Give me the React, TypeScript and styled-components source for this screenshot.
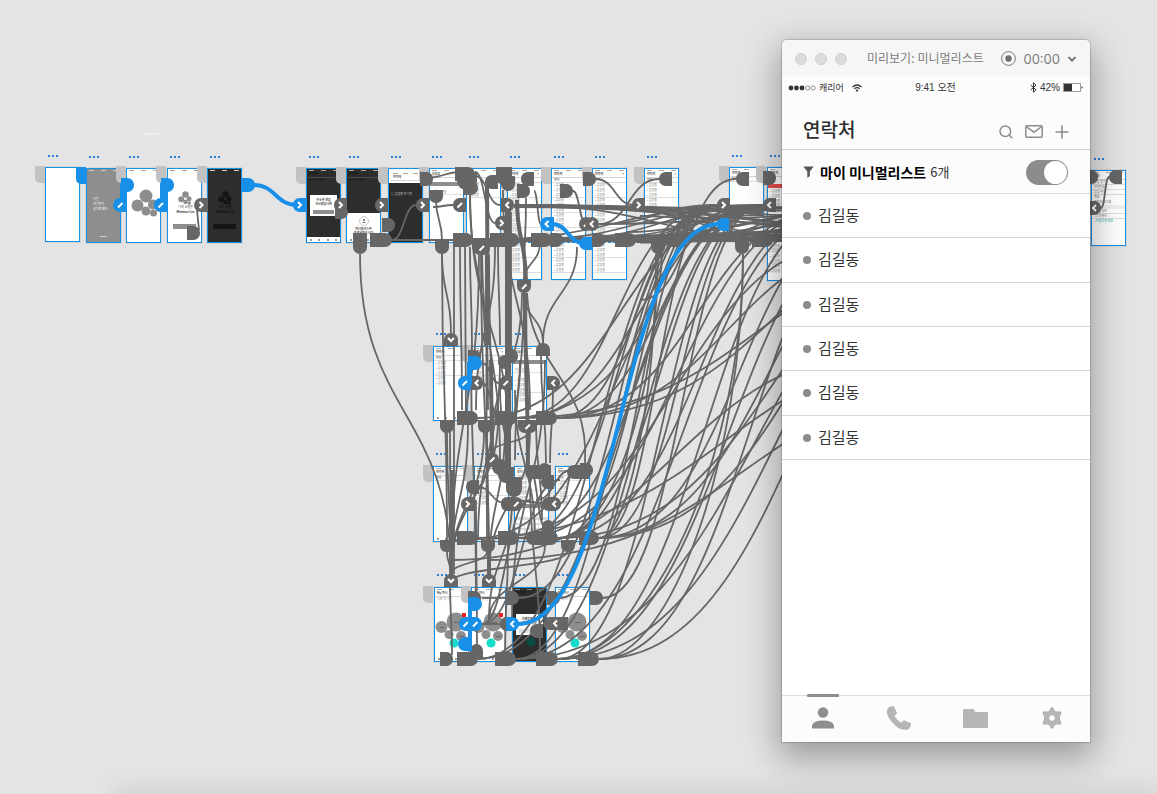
import React from 'react';
import styled, { createGlobalStyle, css } from 'styled-components';

const BLUE = '#1890e8';
const WIRE = '#666666';
const KR = '"Noto Sans CJK KR", sans-serif';

const GlobalStyle = createGlobalStyle`
  * { box-sizing: border-box; }
  body { margin: 0; background: #e4e4e4; font-family: "Liberation Sans", ${KR}; }
  button { border: 0; padding: 0; margin: 0; background: none; font: inherit; color: inherit; }
`;

/* ---------- canvas ---------- */

const Canvas = styled.main`
  position: relative;
  min-height: 100vh;
  overflow: hidden;
  background: #e4e4e4;
`;

const DockShade = styled.div`
  position: absolute;
  left: 120px;
  right: 0;
  bottom: -4px;
  height: 4px;
  box-shadow: 0 4px 24px 6px rgba(0, 0, 0, 0.13);
`;

const StrayLabel = styled.span`
  position: absolute;
  left: 144px;
  top: 132px;
  font-size: 3px;
  line-height: 5px;
  color: #fff;
`;

const HomeTab = styled.span<{ $x: number; $y: number; $on?: boolean }>`
  position: absolute;
  left: ${p => p.$x}px;
  top: ${p => p.$y}px;
  width: 10px;
  height: 17px;
  border-radius: 0 0 0 5px;
  background: ${p => (p.$on ? BLUE : '#c2c2c2')};
`;

const Handle = styled.span<{ $x: number; $y: number }>`
  position: absolute;
  left: ${p => p.$x}px;
  top: ${p => p.$y}px;
  display: flex;
  gap: 2px;
  i { width: 2px; height: 2px; background: #2f82d8; }
`;

const Board = styled.article<{ $x: number; $y: number; $w: number; $h: number; $bg: string; $tall?: boolean }>`
  position: absolute;
  left: ${p => p.$x}px;
  top: ${p => p.$y}px;
  width: ${p => p.$w}px;
  height: ${p => p.$h}px;
  display: flex;
  flex-direction: column;
  overflow: hidden;
  background: ${p => p.$bg};
  border: 1px solid ${BLUE};
  box-shadow: 0 0 0 1px rgba(0, 0, 0, 0.06);
  font-family: ${KR};
  font-size: 3px;
  line-height: 5px;
  color: #666;
  svg { display: block; }
  ${p => p.$tall && css`
    &::after {
      content: '';
      position: absolute;
      left: 0;
      right: 0;
      top: 73px;
      border-top: 1px dashed ${BLUE};
    }
  `}
`;

const MiniStatus = styled.div<{ $c?: string }>`
  display: flex;
  flex: none;
  justify-content: space-between;
  height: 3px;
  padding: 1px 2px;
  i { width: 5px; height: 1px; background: ${p => p.$c || '#aaa'}; }
`;

const MiniTitle = styled.div<{ $c?: string }>`
  display: flex;
  flex: none;
  justify-content: space-between;
  padding: 0 2px;
  height: 6px;
  font-weight: 700;
  color: ${p => p.$c || '#444'};
  border-bottom: 1px solid rgba(128, 128, 128, 0.35);
`;

const MiniRow = styled.div<{ $line?: boolean; $c?: string }>`
  height: 5px;
  flex: none;
  padding-left: 2px;
  color: ${p => p.$c || '#777'};
  border-bottom: 1px solid ${p => (p.$line ? '#dedede' : 'transparent')};
`;

const MiniBar = styled.div<{ $c: string; $m?: string; $h?: number }>`
  flex: none;
  height: ${p => p.$h || 4}px;
  margin: ${p => p.$m || '0'};
  background: ${p => p.$c};
`;

const Fill = styled.div<{ $bg?: string; $pad?: string; $center?: boolean }>`
  flex: 1;
  padding: ${p => p.$pad || '0'};
  background: ${p => p.$bg || 'transparent'};
  text-align: ${p => (p.$center ? 'center' : 'left')};
`;

const MiniCard = styled.div<{ $m: string }>`
  flex: none;
  margin: ${p => p.$m};
  padding: 3px 2px 2px;
  background: #fff;
  color: #333;
  font-weight: 700;
  line-height: 4px;
  text-align: center;
`;

const Keys = styled.div`
  display: grid;
  flex: none;
  grid-template-columns: repeat(7, 1fr);
  gap: 2px 1px;
  height: 24px;
  padding: 3px 1px;
  margin-top: auto;
  background: #d8dbe0;
  i { background: #fff; }
`;

const MiniTabs = styled.div`
  display: flex;
  flex: none;
  justify-content: space-around;
  align-items: center;
  height: 5px;
  background: #fff;
  i { width: 2px; height: 2px; background: #999; }
`;

const Status = ({ c }: { c?: string }) => <MiniStatus $c={c}><i /><i /><i /></MiniStatus>;
const Tabs = () => <MiniTabs><i /><i /><i /><i /></MiniTabs>;

const FlowerSvg = styled.svg`
  margin: 0 auto;
`;

const Flower = ({ c, s }: { c: string; s: number }) => (
  <FlowerSvg width={28 * s} height={28 * s} viewBox="0 0 28 28">
    <g fill={c}>
      <circle cx="15" cy="7" r="6.500" /><circle cx="6.500" cy="16.500" r="6" /><circle cx="22" cy="15.500" r="5" />
      <circle cx="15" cy="22" r="4.500" /><circle cx="22.500" cy="24" r="3.500" />
    </g>
  </FlowerSvg>
);

const BubbleMap = ({ badge }: { badge?: boolean }) => (
  <svg width="33" height="40" viewBox="0 0 33 40">
    <g fill="#8e8e8e">
      <circle cx="21" cy="12" r="9.500" /><circle cx="6.500" cy="17" r="6" />
      <circle cx="14" cy="24.500" r="4.500" /><circle cx="26" cy="26" r="5" />
    </g>
    <g fill="#666"><rect x="19" y="12" width="6" height="1" /><rect x="5" y="17" width="4" height="1" /><rect x="24" y="26" width="5" height="1" /></g>
    <circle cx="19" cy="33" r="4.500" fill="#14dccb" />
    {badge && <rect x="27" y="3" width="4" height="4" fill="#f02020" />}
  </svg>
);

type Kind =
  | 'blank' | 'quote' | 'bubbles' | 'logo' | 'logoDark' | 'dialog' | 'sheet' | 'search'
  | 'list' | 'form' | 'keyboard' | 'map' | 'mapBadge' | 'mapDark' | 'settings' | 'alert';

const names = (n: number) => Array.from({ length: n }, (_, i) => <MiniRow key={i} $line={i % 3 === 2}>• 김길동</MiniRow>);

const Thumb = ({ kind, rows = 7 }: { kind: Kind; rows?: number }) => {
  switch (kind) {
    case 'quote':
      return (
        <>
          <Status c="#ccc" />
          <Fill $pad="25px 0 0 4px"><MiniRow $c="#fff">나는</MiniRow><MiniRow $c="#fff">미니멀리</MiniRow><MiniRow $c="#fff">살기로 했다</MiniRow></Fill>
          <MiniBar $c="#ccc" $h={1} $m="0 13px 5px" />
        </>
      );
    case 'bubbles':
      return <><Status /><Fill $pad="17px 0 0 2px"><Flower c="#8e8e8e" s={1} /></Fill></>;
    case 'logo':
    case 'logoDark': {
      const dark = kind === 'logoDark';
      return (
        <>
          <Status c={dark ? '#ccc' : '#999'} />
          <Fill $center $pad="19px 0 0">
            <Flower c={dark ? '#151515' : '#8e8e8e'} s={0.5} />
            <MiniRow $c={dark ? '#0c0c0c' : '#444'}>나의 소중한</MiniRow>
            <MiniRow $c={dark ? '#0c0c0c' : '#333'}><b>Minimal List</b></MiniRow>
          </Fill>
          <MiniBar $c={dark ? '#151515' : '#8e8e8e'} $h={5} $m="0 5px 13px" />
        </>
      );
    }
    case 'dialog':
      return (
        <>
          <Status c="#aaa" /><MiniTitle $c="#111">연락처</MiniTitle><MiniRow $c="#111">마이 리스트</MiniRow>
          <Fill $pad="12px 3px 0">
            <MiniCard $m="0">주소록 연동<br />하시겠습니까<MiniBar $c="#8e8e8e" $m="4px 1px 0" /></MiniCard>
          </Fill>
          <Tabs />
        </>
      );
    case 'sheet':
      return (
        <>
          <Status c="#aaa" /><MiniTitle $c="#111">연락처</MiniTitle><MiniRow $c="#111">마이 리스트</MiniRow>
          <Fill />
          <MiniCard $m="0">
            <FlowerSvg width="10" height="11" viewBox="0 0 10 11">
              <circle cx="5" cy="5" r="4.500" fill="none" stroke="#999" strokeWidth=".5" />
              <circle cx="5" cy="4" r="1" fill="#555" /><path d="M3 7q2-2 4 0z" fill="#555" />
            </FlowerSvg>
            미니멀리스트<br />추가되었습니다
          </MiniCard>
          <Tabs />
        </>
      );
    case 'search':
      return (
        <>
          <MiniCard $m="0"><Status /><MiniTitle>연락처</MiniTitle></MiniCard>
          <Fill $bg="#2d2d2d" $pad="9px 0 0"><MiniRow $c="#ccc">○ 김길동 미니멀</MiniRow></Fill>
        </>
      );
    case 'list':
      return <><Status /><MiniTitle><span>연락처</span><span>+</span></MiniTitle><MiniRow $line><b>마이</b></MiniRow>{names(rows)}{rows < 15 && <><Fill /><Tabs /></>}</>;
    case 'alert':
      return <><Status /><MiniTitle>연락처</MiniTitle><MiniBar $c="#e84b4b" $m="7px 0 1px" />{names(17)}</>;
    case 'form':
      return <><Status /><MiniTitle>김길동</MiniTitle><MiniBar $c="#8e8e8e" $m="4px 0" /><MiniRow $line>이름 김길동</MiniRow><MiniRow />{names(rows)}<Fill /><Tabs /></>;
    case 'keyboard':
      return (
        <>
          <Status /><MiniTitle>추가</MiniTitle>{names(5)}<MiniBar $c="#8e8e8e" $m="3px 0 0" />
          <Keys>{Array.from({ length: 28 }, (_, i) => <i key={i} />)}</Keys>
        </>
      );
    case 'map':
    case 'mapBadge':
      return <><Status /><MiniTitle>My 미니</MiniTitle><MiniRow>나의 미니멀</MiniRow><Fill $pad="8px 0 0"><BubbleMap badge={kind === 'mapBadge'} /></Fill><Tabs /></>;
    case 'mapDark':
      return (
        <>
          <Status c="#888" /><MiniTitle $c="#111">My 미니</MiniTitle>
          <MiniCard $m="17px 3px 0">삭제할까요?<br />연락처 정보<MiniBar $c="#ddd" $m="4px 1px 0" /></MiniCard>
          <Fill $pad="2px 0 0 13px">
            <svg width="10" height="10" viewBox="0 0 10 10"><circle cx="5" cy="5" r="4.500" fill="#0b4a45" /></svg>
          </Fill>
        </>
      );
    case 'settings':
      return (
        <>
          <Status /><MiniTitle>설정</MiniTitle><MiniRow $line>알림 받기</MiniRow><MiniRow $line>비밀번호</MiniRow><MiniRow $line>잠금 설정</MiniRow>
          <MiniRow>계정</MiniRow><MiniRow>연락처 동기화</MiniRow><MiniBar $c="#f0f0f0" />
          <MiniRow $line>• 버전정보</MiniRow><MiniRow $line>• 고객센터</MiniRow><MiniRow $c="#0a9">• 이용약관 정보</MiniRow>
        </>
      );
    default:
      return null;
  }
};

interface BoardData { x: number; y: number; kind: Kind; h?: number; bg?: string; rows?: number }

const boards: BoardData[] = [
  { x: 45, y: 167, kind: 'blank' },
  { x: 86, y: 168, kind: 'quote', bg: '#8e8e8e' },
  { x: 126, y: 168, kind: 'bubbles' },
  { x: 167, y: 168, kind: 'logo' },
  { x: 207, y: 168, kind: 'logoDark', bg: '#2d2d2d' },
  { x: 306, y: 168, kind: 'dialog', bg: '#2d2d2d' },
  { x: 346, y: 168, kind: 'sheet', bg: '#2d2d2d' },
  { x: 388, y: 168, kind: 'search', bg: '#2d2d2d' },
  { x: 429, y: 168, kind: 'form', rows: 0 },
  { x: 466, y: 168, kind: 'list', rows: 3 },
  { x: 507, y: 168, kind: 'list', h: 112, rows: 18 },
  { x: 551, y: 168, kind: 'list', h: 112, rows: 18 },
  { x: 592, y: 168, kind: 'list', h: 112, rows: 18 },
  { x: 644, y: 168, kind: 'list', rows: 6 },
  { x: 729, y: 167, kind: 'list', rows: 0 },
  { x: 767, y: 167, kind: 'alert', h: 114 },
  { x: 1091, y: 170, kind: 'settings', h: 76 },
  { x: 433, y: 346, kind: 'list', rows: 5 },
  { x: 471, y: 346, kind: 'list', rows: 5 },
  { x: 512, y: 346, kind: 'form', rows: 5 },
  { x: 433, y: 466, kind: 'list', h: 76, rows: 0 },
  { x: 474, y: 466, kind: 'list', h: 76, rows: 5 },
  { x: 514, y: 466, kind: 'keyboard', h: 76 },
  { x: 555, y: 466, kind: 'list', h: 76, rows: 5 },
  { x: 434, y: 587, kind: 'mapBadge' },
  { x: 471, y: 587, kind: 'mapBadge' },
  { x: 512, y: 587, kind: 'mapDark', bg: '#2d2d2d' },
  { x: 555, y: 587, kind: 'map' },
];

const tabs: [number, number][] = [
  [35, 166], [116, 166], [156, 166], [197, 166], [296, 167], [336, 167], [378, 167], [419, 167],
  [541, 167], [582, 167], [634, 167], [719, 166], [756, 166],
  [423, 345], [461, 345], [423, 465], [463, 465], [423, 586], [461, 586],
];

/* ---------- wires ---------- */

type Seg = [number, number, number, number];
const across = ([a, b, c, d]: Seg) => `M${a} ${b}C${(a + c) / 2} ${b} ${(a + c) / 2} ${d} ${c} ${d}`;
const down = ([a, b, c, d]: Seg) => `M${a} ${b}C${a} ${(b + d) / 2} ${c} ${(b + d) / 2} ${c} ${d}`;
const bend = ([a, b, c, d]: Seg) => `M${a} ${b}C${a} ${(b + d) / 2} ${(a + c) / 2} ${d} ${c} ${d}`;

const acrossWires: Seg[] = [
  // short links inside the top row
  [392, 240, 416, 205], [433, 207, 453, 205], [390, 240, 640, 240], [427, 178, 460, 172],
  [475, 172, 495, 223], [475, 176, 500, 205], [534, 191, 541, 224], [573, 191, 586, 224],
  [596, 179, 634, 205], [659, 179, 599, 224], [736, 179, 640, 300], [717, 205, 672, 230], [1101, 208, 1109, 177],
  // long runs towards the right
  [514, 205, 850, 226], [514, 205, 900, 212], [514, 205, 800, 240], [514, 206, 1005, 222], [514, 207, 960, 236],
  [473, 240, 763, 205], [519, 240, 763, 206], [552, 240, 763, 208], [563, 240, 840, 205], [604, 240, 763, 215],
  [599, 224, 717, 205], [599, 224, 840, 215], [636, 240, 763, 205], [636, 240, 840, 222], [688, 240, 763, 205],
  [688, 240, 840, 205], [519, 240, 900, 230], [473, 240, 900, 237], [519, 241, 840, 241], [552, 238, 820, 234],
  [596, 236, 800, 232], [640, 237, 820, 230], [636, 242, 800, 240], [688, 238, 850, 212],
  [627, 232, 763, 212], [640, 216, 800, 236], [600, 208, 790, 236],
  // second row to the top row and beyond
  [517, 418, 717, 205], [517, 418, 763, 205], [557, 418, 717, 205], [557, 418, 763, 205], [557, 418, 840, 205],
  [557, 418, 900, 240], [557, 418, 1005, 205], [517, 418, 1005, 240], [478, 418, 763, 205],
  // third row
  [478, 538, 763, 205], [519, 538, 717, 205], [519, 538, 763, 205], [519, 538, 840, 205],
  [558, 538, 717, 205], [558, 538, 763, 205], [558, 538, 840, 205], [599, 538, 717, 205], [599, 538, 763, 205],
  [599, 538, 880, 205], [599, 538, 940, 205], [558, 538, 1005, 205], [599, 538, 1005, 205],
  [452, 540, 1000, 340], [452, 560, 900, 350], [490, 560, 1000, 380], [490, 538, 860, 240],
  // fourth row
  [478, 659, 717, 205], [478, 659, 763, 205], [516, 659, 717, 205], [516, 659, 763, 205], [516, 659, 850, 205],
  [516, 659, 1005, 205], [558, 659, 763, 205], [558, 659, 850, 205], [558, 659, 900, 205], [558, 659, 1005, 205],
  [599, 659, 900, 205], [599, 659, 1005, 205],
  [602, 598, 763, 205], [559, 598, 717, 205], [519, 598, 717, 205], [482, 598, 506, 598],
  [482, 624, 560, 480], [482, 624, 530, 500], [482, 624, 506, 624],
  // links inside the lower rows
  [482, 363, 499, 383], [482, 383, 500, 418], [536, 500, 572, 470], [510, 500, 545, 503], [554, 482, 545, 503],
  [530, 470, 545, 527], [478, 487, 505, 503], [478, 487, 493, 462], [574, 470, 561, 503],
];

const downWires: Seg[] = [
  [360, 254, 451, 574], [442, 254, 451, 333], [442, 254, 447, 540], [436, 200, 442, 240], [481, 255, 489, 574],
  [454, 247, 454, 574], [465, 247, 466, 420], [470, 195, 485, 346], [470, 247, 472, 350],
  [470, 190, 510, 460], [479, 255, 451, 574], [486, 247, 487, 540], [482, 247, 500, 460], [486, 247, 488, 410],
  [489, 255, 492, 453], [495, 247, 476, 410], [511, 212, 511, 350], [503, 190, 530, 410], [526, 198, 524, 282],
  [522, 293, 491, 453], [524, 293, 543, 343], [524, 293, 515, 460], [540, 243, 524, 282], [577, 247, 543, 343],
  [541, 355, 546, 463], [553, 390, 550, 463],
  [447, 432, 451, 574], [450, 432, 451, 574], [484, 432, 451, 574], [487, 432, 489, 574], [498, 419, 451, 574],
  [468, 425, 451, 574], [528, 432, 491, 453], [530, 432, 489, 574], [505, 425, 489, 574], [536, 425, 542, 520],
  [447, 552, 451, 574], [487, 552, 451, 574], [567, 552, 451, 582], [487, 545, 489, 574], [450, 580, 452, 655],
  [476, 500, 477, 650], [508, 545, 505, 652], [530, 478, 540, 652], [512, 500, 489, 620], [545, 545, 489, 620],
  [460, 247, 462, 410], [498, 247, 500, 345], [471, 350, 476, 595], [500, 390, 510, 480], [520, 360, 505, 480],
  [545, 360, 512, 620], [500, 360, 478, 540], [515, 390, 535, 540],
];

// runs where several wires lie side by side
const bundles: { s: Seg; w: number }[] = [
  { s: [508, 200, 508, 480], w: 6 },
  { s: [487, 186, 488, 345], w: 4 },
  { s: [525, 293, 528, 470], w: 4 },
  { s: [517, 200, 526, 282], w: 4 },
  { s: [452, 470, 451, 585], w: 4 },
  { s: [491, 360, 492, 460], w: 4 },
  { s: [489, 540, 489, 576], w: 4 },
];

const bendWires: Seg[] = [
  [658, 254, 560, 538], [656, 254, 599, 538], [743, 254, 558, 659], [743, 254, 599, 659], [662, 254, 517, 418],
];

type Glyph = '>' | '<' | 'v' | '/' | '';
type Dir = 'r' | 'l' | 'd' | 'u' | 'o';
interface NodeData { d: Dir; x: number; y: number; w?: number; h?: number; g?: Glyph; on?: boolean }
const n = (d: Dir, x: number, y: number, w = 13, h = 14, g: Glyph = '', on = false): NodeData => ({ d, x, y, w, h, g, on });

const nodes: NodeData[] = [
  n('l', 194, 198, 14, 14, '>'), n('r', 187, 226), n('r', 335, 206, 13, 13), n('l', 334, 198, 13, 14, '>'),
  n('l', 375, 198, 13, 14, '>'), n('r', 382, 218), n('d', 353, 233, 14, 21), n('r', 370, 233, 22),
  n('l', 416, 198, 13, 14, '>'), n('r', 420, 172), n('d', 429, 190, 14, 13), n('l', 453, 198, 13, 14, '/'),
  n('r', 455, 167, 20), n('d', 457, 172, 20, 18), n('r', 463, 181, 15), n('d', 435, 241, 14, 13),
  n('r', 453, 233, 20), n('l', 495, 216, 13, 14, '>'), n('l', 485, 175), n('d', 496, 167, 16, 18),
  n('d', 501, 176, 14, 15), n('r', 501, 198, 13, 14, '<'), n('l', 521, 172), n('r', 517, 184), n('r', 560, 184),
  n('o', 579, 217, 14, 14, '/'), n('o', 585, 217, 14, 14, '<'), n('r', 583, 172), n('r', 490, 233, 29),
  n('d', 473, 241, 17, 14, '/'), n('r', 531, 233, 21), n('r', 550, 233), n('r', 592, 233), n('r', 615, 233, 21),
  n('d', 517, 280, 14, 13, '/'), n('l', 632, 198, 13, 14, '>'), n('l', 659, 172), n('l', 717, 198, 13, 14, '>'),
  n('l', 736, 172), n('r', 763, 171), n('l', 763, 198, 13, 14, '<'), n('d', 651, 240, 14, 14), n('r', 667, 233, 21),
  n('d', 735, 240, 14, 14), n('r', 752, 233, 21), n('r', 1085, 170), n('l', 1109, 170), n('r', 1088, 201, 13, 14, '<'),

  n('u', 444, 333, 14, 13, 'v'), n('r', 468, 350), n('r', 471, 376, 12, 14, '<'), n('l', 498, 355), n('r', 505, 349),
  n('l', 499, 376, 13, 14, '/'), n('u', 536, 343, 14, 13), n('r', 547, 376, 13, 14, '<'), n('r', 457, 411, 21),
  n('r', 495, 411, 22), n('r', 536, 411, 21), n('d', 440, 420, 14, 13), n('d', 478, 420, 14, 13), n('d', 518, 420, 19, 13, '/'),

  n('o', 485, 453, 14, 13, '/'), n('o', 492, 459, 16, 16), n('d', 498, 467, 16, 16), n('d', 506, 477, 16, 20),
  n('l', 501, 497, 12, 14), n('r', 509, 497, 14, 14, '/'), n('l', 466, 480), n('l', 461, 497, 13, 14, '>'),
  n('l', 525, 465, 26), n('u', 538, 463, 13, 13), n('l', 541, 475), n('l', 542, 497, 13, 14), n('r', 548, 497, 13, 14, '<'),
  n('u', 542, 520, 12, 13), n('l', 567, 465, 22), n('r', 580, 463), n('r', 457, 531, 21), n('r', 498, 531, 21),
  n('l', 526, 531, 20), n('r', 540, 531, 18), n('r', 579, 531, 20), n('d', 440, 540, 14, 12), n('d', 481, 540, 14, 12),
  n('d', 561, 540, 14, 12),

  n('u', 444, 574, 14, 13, 'v'), n('u', 482, 574, 14, 13, 'v'), n('r', 468, 591), n('u', 470, 644, 13, 14),
  n('r', 440, 652), n('r', 457, 652, 21), n('r', 495, 652, 21), n('r', 536, 652, 22), n('r', 578, 652, 21),
  n('r', 506, 591), n('r', 547, 591), n('r', 590, 591), n('l', 500, 617), n('l', 530, 624), n('l', 543, 617, 25, 13, '<'),

  n('r', 121, 178, 13, 14, '', true), n('l', 113, 198, 14, 14, '/', true), n('r', 161, 178, 13, 14, '', true),
  n('l', 154, 198, 13, 14, '/', true), n('r', 242, 178, 13, 14, '', true), n('l', 293, 198, 13, 14, '>', true),
  n('l', 540, 217, 14, 14, '<', true), n('l', 579, 237, 13, 13, '', true), n('l', 717, 218, 12, 13, '', true),
  n('r', 468, 356, 14, 14, '', true), n('l', 458, 376, 13, 14, '/', true), n('r', 468, 597, 14, 14, '', true),
  n('l', 459, 617, 13, 14, '/', true), n('r', 468, 617, 14, 14, '/', true), n('l', 458, 637, 14, 14, '', true),
  n('r', 506, 617, 13, 14, '<', true),
];

const blueWires = [
  { d: across([254, 185, 297, 205]), w: 4 },
  { d: across([518, 624, 719, 224]), w: 4 },
  { d: across([552, 224, 584, 243]), w: 4 },
  { d: 'M124 186V205', w: 6 }, { d: 'M164 186V205', w: 6 }, { d: 'M470 363V385', w: 4 }, { d: 'M470 604V644', w: 4 },
];

const nodePath = ({ d, x, y, w = 13, h = 14 }: NodeData) => {
  const r = Math.min(w, h) / 2;
  const a = `A${r} ${r} 0 0 1`;
  const X = x + w, Y = y + h;
  if (d === 'r') return `M${x} ${y}H${X - r}${a} ${X} ${y + r}V${Y - r}${a} ${X - r} ${Y}H${x}Z`;
  if (d === 'l') return `M${X} ${Y}H${x + r}${a} ${x} ${Y - r}V${y + r}${a} ${x + r} ${y}H${X}Z`;
  if (d === 'd') return `M${x} ${y}H${X}V${Y - r}${a} ${X - r} ${Y}H${x + r}${a} ${x} ${Y - r}Z`;
  if (d === 'u') return `M${x} ${Y}V${y + r}${a} ${x + r} ${y}H${X - r}${a} ${X} ${y + r}V${Y}Z`;
  return `M${x} ${y + r}A${r} ${r} 0 1 1 ${X} ${y + r}A${r} ${r} 0 1 1 ${x} ${y + r}Z`;
};

const glyphPath: Record<string, string> = {
  '>': 'M-1.500-3L1.500 0L-1.500 3',
  '<': 'M1.500-3L-1.500 0L1.500 3',
  v: 'M-3-1.500L0 1.500L3-1.500',
  '/': 'M-2 2.500L2.500-2',
};

const WireLayer = styled.svg`
  position: absolute;
  left: 0;
  top: 0;
  pointer-events: none;
`;

const Pin = ({ node }: { node: NodeData }) => (
  <g>
    <path d={nodePath(node)} fill={node.on ? BLUE : WIRE} />
    {node.g && (
      <path
        d={glyphPath[node.g]}
        transform={`translate(${node.x + (node.w || 13) / 2} ${node.y + (node.h || 14) / 2})`}
        fill="none" stroke="#fff" strokeWidth="2"
      />
    )}
  </g>
);

const Wires = () => (
  <WireLayer width="1157" height="794" viewBox="0 0 1157 794" aria-hidden="true">
    <g fill="none" stroke={WIRE} strokeWidth="1.800">
      {acrossWires.map((s, i) => <path key={`a${i}`} d={across(s)} />)}
      {downWires.map((s, i) => <path key={`d${i}`} d={down(s)} />)}
      {bendWires.map((s, i) => <path key={`b${i}`} d={bend(s)} />)}
      {bundles.map((b, i) => <path key={`g${i}`} d={down(b.s)} strokeWidth={b.w} />)}
      <path d="M527 293C530 370 590 380 585 463" />
      <path d="M197 210L199 230" />
      <path d="M514 205.500Q640 204 790 224" strokeWidth="3" />
      <path d="M466 240H640Q720 241 790 236" strokeWidth="4" />
      <path d="M636 238Q720 232 790 214M640 242Q720 243 790 228M690 212Q750 206 790 208" strokeWidth="3" />
    </g>
    {nodes.filter(p => !p.on).map((p, i) => <Pin key={i} node={p} />)}
    <g fill="none" stroke={BLUE}>
      {blueWires.map((b, i) => <path key={i} d={b.d} strokeWidth={b.w} />)}
    </g>
    {nodes.filter(p => p.on).map((p, i) => <Pin key={i} node={p} />)}
  </WireLayer>
);

/* ---------- preview window ---------- */

const Preview = styled.section`
  position: absolute;
  left: 782px;
  top: 40px;
  width: 308px;
  min-height: 702px;
  display: flex;
  flex-direction: column;
  background: #fff;
  border-radius: 5px 5px 0 0;
  box-shadow: 0 0 1px 1px rgba(0, 0, 0, 0.16), 0 12px 34px 4px rgba(0, 0, 0, 0.32);
`;

const TitleBar = styled.header`
  display: flex;
  align-items: center;
  height: 37px;
  padding: 0 13px;
  background: #f6f6f6;
  border-radius: 5px 5px 0 0;
  color: #7c7c7c;
`;

const Lights = styled.div`
  display: flex;
  gap: 8px;
`;

const Light = styled.button`
  width: 12px;
  height: 12px;
  border: 1px solid #cfcfcf;
  border-radius: 50%;
  background: #dcdcdc;
`;

const WindowTitle = styled.h1`
  margin: 0 0 0 20px;
  font: 400 12px/18px "Noto Sans", ${KR};
`;

const Recorder = styled.div`
  display: flex;
  align-items: center;
  gap: 7px;
  margin-left: auto;
  font: 400 13px/18px Inter, sans-serif;
`;

const IconButton = styled.button`
  display: flex;
  align-items: center;
  justify-content: center;
`;

const StatusBar = styled.div`
  display: grid;
  grid-template-columns: 1fr auto 1fr;
  align-items: center;
  height: 21px;
  padding: 0 7px 0 6px;
  background: #fcfcfc;
  color: #333;
  font-size: 10px;
  line-height: 14px;
`;

const StatusGroup = styled.div<{ $end?: boolean }>`
  display: flex;
  align-items: center;
  gap: 3px;
  justify-content: ${p => (p.$end ? 'flex-end' : 'flex-start')};
`;

const Carrier = styled.span`
  margin-right: 5px;
  font-size: 9px;
`;

const PageHead = styled.div`
  display: flex;
  align-items: center;
  justify-content: space-between;
  height: 52px;
  padding: 10px 21px 0;
  background: #fcfcfc;
  border-bottom: 1px solid #d2d2d2;
`;

const PageTitle = styled.h2`
  margin: 0;
  color: #2e2e2e;
  font: 500 19px/28px ${KR};
`;

const Actions = styled.div`
  display: flex;
  align-items: center;
  gap: 12px;
  padding-top: 6px;
`;

const FilterRow = styled.label`
  display: flex;
  align-items: center;
  height: 44px;
  padding: 0 22px 0 21px;
  background: #fcfcfc;
  border-bottom: 1px solid #dcdcdc;
  color: #333;
  font: 400 13px/20px ${KR};
  strong { margin: 0 4px 0 6px; color: #000; font-size: 14px; font-weight: 700; }
`;

const Switch = styled.input`
  appearance: none;
  display: flex;
  justify-content: flex-end;
  width: 42px;
  height: 25px;
  margin: 2px 0 0 auto;
  padding: 1px;
  border-radius: 13px;
  background: #8c8c8c;
  &::before {
    content: '';
    width: 23px;
    height: 23px;
    border-radius: 50%;
    background: #fff;
  }
`;

const People = styled.ul`
  display: grid;
  grid-auto-rows: 1fr;
  min-height: 266px;
  margin: 0;
  padding: 0;
  list-style: none;
`;

const Person = styled.li`
  display: flex;
  align-items: center;
  gap: 7px;
  padding: 0 0 1px 21px;
  border-bottom: 1px solid #d6d6d6;
  color: #333;
  font: 400 15px/22px ${KR};
  &::before {
    content: '';
    width: 8px;
    height: 8px;
    margin-top: 2px;
    border-radius: 50%;
    background: #8c8c8c;
  }
`;

const TabBar = styled.nav`
  display: grid;
  grid-template-columns: repeat(4, 1fr);
  height: 47px;
  margin-top: auto;
  padding-left: 3px;
  background: #fcfcfc;
  border-top: 1px solid #dedede;
`;

const Tab = styled.button<{ $active?: boolean }>`
  position: relative;
  display: flex;
  align-items: center;
  justify-content: center;
  padding-bottom: 2px;
  color: ${p => (p.$active ? '#8e8e8e' : '#b5b5b5')};
  ${p => p.$active && css`
    &::before {
      content: '';
      position: absolute;
      top: -2px;
      width: 32px;
      height: 3px;
      border-radius: 1px;
      background: #8e8e8e;
    }
  `}
`;

const people = ['김길동', '김길동', '김길동', '김길동', '김길동', '김길동'];

const PreviewWindow = () => (
  <Preview>
    <TitleBar>
      <Lights><Light aria-label="닫기" /><Light aria-label="최소화" /><Light aria-label="확대" /></Lights>
      <WindowTitle>미리보기: 미니멀리스트</WindowTitle>
      <Recorder>
        <IconButton aria-label="녹화">
          <svg width="15" height="15" viewBox="0 0 15 15">
            <circle cx="7.500" cy="7.500" r="6.900" fill="none" stroke="#777" /><circle cx="7.500" cy="7.500" r="3.200" fill="#707070" />
          </svg>
        </IconButton>
        <time>00:00</time>
        <IconButton aria-label="옵션">
          <svg width="10" height="8" viewBox="0 0 10 8"><path d="M1.500 2L5 5.700L8.500 2" fill="none" stroke="#666" strokeWidth="1.800" /></svg>
        </IconButton>
      </Recorder>
    </TitleBar>
    <StatusBar>
      <StatusGroup>
        <svg width="28" height="6" viewBox="0 0 28 6">
          <g fill="#333"><circle cx="3" cy="3" r="2.400" /><circle cx="8.500" cy="3" r="2.400" /><circle cx="14" cy="3" r="2.400" /></g>
          <g fill="none" stroke="#555" strokeWidth=".6"><circle cx="19.500" cy="3" r="2.100" /><circle cx="25" cy="3" r="2.100" /></g>
        </svg>
        <Carrier>캐리어</Carrier>
        <svg width="10" height="8" viewBox="0 0 10 8">
          <g fill="none" stroke="#333" strokeWidth="1.200"><path d="M.5 3Q5-1 9.500 3" /><path d="M2.200 4.900Q5 2.500 7.800 4.900" /></g>
          <path d="M3.600 6.200Q5 5 6.400 6.200L5 7.900z" fill="#333" />
        </svg>
      </StatusGroup>
      <span>9:41 오전</span>
      <StatusGroup $end>
        <svg width="7" height="11" viewBox="0 0 7 11"><path d="M.7 3L6 7.800L3.500 10.200V.8L6 3.200L.7 8" fill="none" stroke="#333" /></svg>
        <span>42%</span>
        <svg width="20" height="9" viewBox="0 0 20 9">
          <rect x=".5" y=".5" width="17" height="8" fill="#fff" stroke="#888" strokeWidth=".8" />
          <rect x="1" y="1" width="8" height="7" fill="#333" /><path d="M18.500 3L20 4.500L18.500 6z" fill="#444" />
        </svg>
      </StatusGroup>
    </StatusBar>
    <PageHead>
      <PageTitle>연락처</PageTitle>
      <Actions>
        <IconButton aria-label="검색">
          <svg width="14" height="14" viewBox="0 0 14 14" fill="none" stroke="#8c8c8c" strokeWidth="1.500"><circle cx="6.300" cy="6.300" r="5.300" /><path d="M10 10L13.300 13.300" /></svg>
        </IconButton>
        <IconButton aria-label="메일">
          <svg width="18" height="13" viewBox="0 0 18 13" fill="none" stroke="#8c8c8c" strokeWidth="1.500"><rect x=".8" y=".8" width="16.400" height="11.400" rx="1" /><path d="M1.200 1.500L9 7.200L16.800 1.500" /></svg>
        </IconButton>
        <IconButton aria-label="추가">
          <svg width="14" height="14" viewBox="0 0 14 14" fill="none" stroke="#8c8c8c" strokeWidth="1.600"><path d="M7 .5V13.500M.5 7H13.500" /></svg>
        </IconButton>
      </Actions>
    </PageHead>
    <FilterRow>
      <svg width="11" height="12" viewBox="0 0 11 12"><path d="M.3 .5H10.700L6.800 5.500V10.300L4.300 11.700V5.500z" fill="#555" /></svg>
      <strong>마이 미니멀리스트</strong>
      6개
      <Switch type="checkbox" role="switch" defaultChecked />
    </FilterRow>
    <People>{people.map((p, i) => <Person key={i}>{p}</Person>)}</People>
    <TabBar>
      <Tab $active aria-label="연락처">
        <svg width="22" height="22" viewBox="0 0 22 22" fill="currentColor"><circle cx="11" cy="5.500" r="5.200" /><path d="M0 21.500V18.500Q1.500 13.500 11 13.500T22 18.500V21.500z" /></svg>
      </Tab>
      <Tab aria-label="통화">
        <svg width="24" height="24" viewBox="0 0 24 24" fill="currentColor"><path d="M1.500 1.500Q4-.5 7 .5L10.200 7.300L7.700 9.700Q9 13.300 14 16.700L17 14.200L24 17.200Q24.500 20.500 21.500 23.200Q15 25.500 8 19.200Q-2 9.500 .2 3.200z" /></svg>
      </Tab>
      <Tab aria-label="폴더">
        <svg width="25" height="19" viewBox="0 0 25 19" fill="currentColor"><path d="M0 1Q0 0 1 0H10.500L12.500 3H24Q25 3 25 4V18Q25 19 24 19H1Q0 19 0 18z" /></svg>
      </Tab>
      <Tab aria-label="설정">
        <svg width="22" height="22" viewBox="0 0 22 22" fill="currentColor">
          <path fillRule="evenodd" d="M11 0Q12.300 0 13.600 3.400L15.500 4.400Q19 3.800 20.300 4.800Q21.200 6.500 19 9.300V12.700Q21.200 15.500 20.300 17.200Q19 18.200 15.500 17.600L13.600 18.600Q12.300 22 11 22T8.400 18.600L6.500 17.600Q3 18.200 1.700 17.200Q.8 15.500 3 12.700V9.300Q.8 6.500 1.700 4.800Q3 3.800 6.500 4.400L8.400 3.400Q9.700 0 11 0zM11 8.200A2.800 2.800 0 1 0 11 13.800A2.800 2.800 0 1 0 11 8.200z" />
        </svg>
      </Tab>
    </TabBar>
  </Preview>
);

export default function App() {
  return (
    <>
      <GlobalStyle />
      <Canvas>
        <StrayLabel>Minimal List</StrayLabel>
        {boards.map((b, i) => (
          <React.Fragment key={i}>
            <Handle $x={b.x + 3} $y={b.y - (b.y > 300 ? 13 : 12)}><i /><i /><i /></Handle>
            <Board $x={b.x} $y={b.y} $w={35} $h={b.h || 75} $bg={b.bg || '#fff'} $tall={(b.h || 0) > 100}>
              <Thumb kind={b.kind} rows={b.rows} />
            </Board>
          </React.Fragment>
        ))}
        {tabs.map(([x, y], i) => <HomeTab key={i} $x={x} $y={y} />)}
        <HomeTab $x={76} $y={167} $on />
        <Wires />
        <PreviewWindow />
        <DockShade />
      </Canvas>
    </>
  );
}
